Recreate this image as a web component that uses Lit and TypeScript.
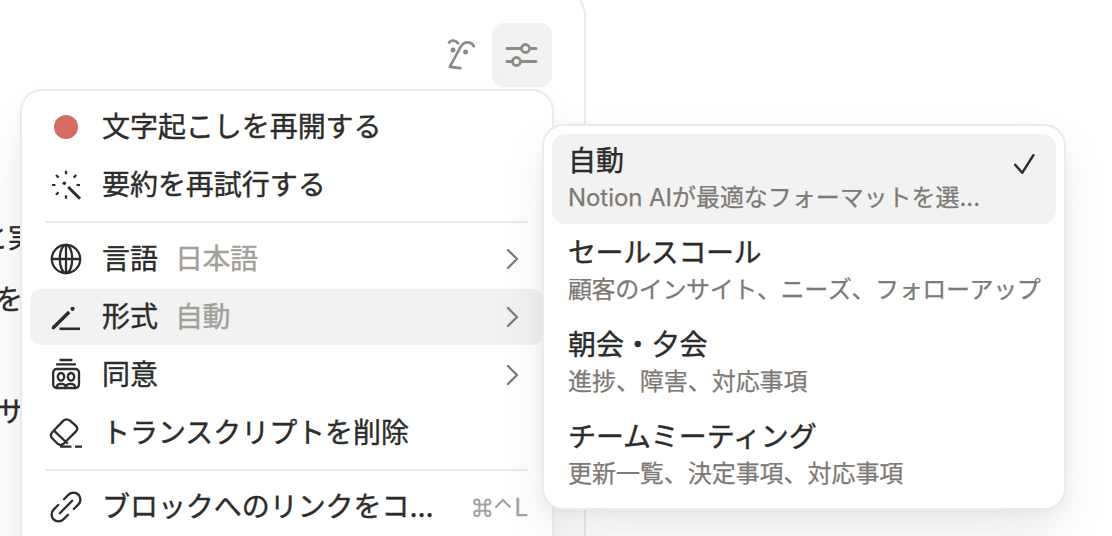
import { LitElement, html, css, svg, nothing } from "lit";
import { customElement, property } from "lit/decorators.js";

const icons: Record<string, unknown> = {
  record: svg`<circle cx="18" cy="18" r="12" fill="#d66c60" stroke="none"/>`,
  wand: svg`<path d="M18 3.8v3.4M18 28.2v3.6M4 18h3.4M28.6 18h3.4M8 8l2.6 2.6M28.2 8l-2.6 2.6M8 27.8l2.6-2.6" stroke-width="2.2" stroke-linecap="butt"/><circle cx="16.3" cy="16.2" r="1.8" fill="currentColor" stroke="none"/><path d="M20.2 20L32 31.8" stroke-width="3" stroke-linecap="butt"/>`,
  globe: svg`<circle cx="18" cy="18" r="14.2"/><ellipse cx="18" cy="18" rx="6.2" ry="14.2"/><path d="M4 18h28M18 4v28"/>`,
  pencil: svg`<path d="M5 29L21.2 13" stroke-width="3.4" stroke-linecap="butt"/><path d="M5 29.2l1-1" stroke-width="2.6"/><circle cx="24.6" cy="9.8" r="2.1" fill="currentColor" stroke="none"/><path d="M11.5 29.8H32" stroke-width="2.6" stroke-linecap="butt"/>`,
  consent: svg`<path d="M12.5 3h11M9 7.4h18"/><rect x="5.2" y="12" width="25.8" height="19" rx="3.5"/><ellipse cx="13" cy="19.8" rx="3.2" ry="3.8"/><ellipse cx="23" cy="19.8" rx="3.2" ry="3.8"/><path d="M8.6 30.4c.5-4.6 8.6-4.6 9.3 0c.5-4.6 8.8-4.6 9.3 0"/>`,
  eraser: svg`<path d="M15.2 5.9l-11 11.4q-2.7 3 0 6l5.4 5.4q3 2.5 6 0L28 16.4q2.5-2.8 0-5.5l-6-5.3q-3.6-2.7-6.8.3zM6 15.6L19 28"/><path d="M12 31.6h11.5M27 31.6h7" stroke-width="2.3" stroke-linecap="butt"/>`,
  link: svg`<path d="M11.8 24.2L24.2 11.8"/><path d="M16 10.2l4.6-4.6a6.9 6.9 0 0 1 9.8 9.8L25.8 20M10.2 16l-4.6 4.6a6.9 6.9 0 0 0 9.8 9.8L20 25.8"/>`,
};

@customElement("menu-row")
class MenuRow extends LitElement {
  @property() icon = "";
  @property() label = "";
  @property() value = "";
  @property() shortcut = "";
  @property({ type: Boolean }) submenu = false;
  @property({ type: Boolean, reflect: true }) active = false;

  static styles = css`
    :host {
      display: flex;
      align-items: center;
      height: 56px;
      padding: 0 16px 0 18px;
      border-radius: 12px;
      color: #2c2c2b;
      white-space: nowrap;
    }
    :host([active]) { background: #f2f2f2; }
    .icon {
      width: 36px;
      height: 36px;
      margin-right: 18px;
      fill: none;
      stroke: currentColor;
      stroke-width: 2.3;
      stroke-linecap: round;
      stroke-linejoin: round;
      flex: none;
    }
    .label { letter-spacing: -0.05px; line-height: 40px; -webkit-text-stroke: 0.4px currentColor; }
    .value { color: #a39f99; margin-left: 17px; line-height: 40px; letter-spacing: -0.4px; -webkit-text-stroke: 0.4px currentColor; }
    .spacer { flex: 1; }
    .chevron { width: 16px; height: 24px; margin-right: 8px; fill: none; stroke: #7f7e7a; stroke-width: 2.3; stroke-linecap: round; stroke-linejoin: round; }
    .shortcut { display: flex; align-items: center; color: #a5a29d; font: 24px Inter, sans-serif; gap: 2px; margin-top: 1px; -webkit-text-stroke: 0.3px currentColor; }
    .keys { width: 40px; height: 22px; fill: none; stroke: currentColor; stroke-width: 2; }
  `;

  render() {
    return html`
      <svg class="icon" viewBox="0 0 36 36">${icons[this.icon]}</svg>
      <span class="label">${this.label}</span>
      ${this.value ? html`<span class="value">${this.value}</span>` : nothing}
      <span class="spacer"></span>
      ${this.shortcut
        ? html`<span class="shortcut">
            <svg class="keys" viewBox="0 0 40 22">
              <path d="M7.4 7.6H4.8A2.6 2.6 0 1 1 7.4 5v11.4a2.6 2.6 0 1 1-2.6-2.6h11a2.6 2.6 0 1 1-2.6 2.6V5A2.6 2.6 0 1 1 15.8 7.6z" />
              <path d="M23.5 10.5l7.5-7.5 7.5 7.5" stroke-width="2.2" />
            </svg>${this.shortcut}</span>`
        : nothing}
      ${this.submenu ? html`<svg class="chevron" viewBox="0 0 16 24"><path d="M4 3l9 9-9 9" /></svg>` : nothing}
    `;
  }
}

@customElement("format-option")
class FormatOption extends LitElement {
  @property() name = "";
  @property() detail = "";
  @property({ type: Boolean, reflect: true }) selected = false;
  @property({ type: Boolean, reflect: true }) condensed = false;

  static styles = css`
    :host {
      display: flex;
      box-sizing: border-box;
      height: 90px;
      padding: 7px 15px 0 16px;
      border-radius: 14px;
      white-space: nowrap;
    }
    :host([selected]) { background: #f2f2f2; }
    .text { flex: 1; min-width: 0; }
    .name { font-size: 28px; line-height: 40px; letter-spacing: -0.1px; color: #2c2c2b; -webkit-text-stroke: 0.4px currentColor; }
    .detail { font-size: 24px; line-height: 34px; letter-spacing: -0.05px; color: #7d7a75; -webkit-text-stroke: 0.25px currentColor; font-kerning: none; }
    :host([condensed]) .name { letter-spacing: -0.4px; }
    :host([condensed]) .detail { letter-spacing: -0.38px; }
    .check { width: 24px; height: 24px; margin: 11px 5px 0 0; fill: none; stroke: #2c2c2b; stroke-width: 2.5; stroke-linecap: round; stroke-linejoin: round; }
  `;

  render() {
    return html`
      <div class="text">
        <div class="name">${this.name}</div>
        <div class="detail">${this.detail}</div>
      </div>
      ${this.selected ? html`<svg class="check" viewBox="0 0 24 24"><path d="M3.2 12.8l7 8L21.4 3.2" /></svg>` : nothing}
    `;
  }
}

@customElement("app-root")
class AppRoot extends LitElement {
  static styles = css`
    :host {
      display: block;
      position: relative;
      width: 1112px;
      height: 536px;
      overflow: hidden;
      background: #fff;
      color: #2c2c2b;
      font-family: Inter, "Noto Sans CJK JP", sans-serif;
      font-size: 28px;
    }
    .panel {
      box-sizing: border-box;
      width: 586px;
      height: 580px;
      margin-top: -12px;
      border: 2px solid #ebebeb;
      border-left: 0;
      border-radius: 0 28px 0 0;
    }
    .toolbar { display: flex; justify-content: flex-end; align-items: center; padding: 33px 32px 0 0; height: 64px; gap: 15px; }
    .face { width: 32px; height: 36px; fill: none; stroke: #8e8b86; stroke-width: 2.7; stroke-linecap: round; stroke-linejoin: round; }
    .settings { display: flex; align-items: center; justify-content: center; width: 60px; height: 64px; border-radius: 12px; background: #f2f2f2; }
    .sliders { width: 34px; height: 28px; margin-right: 2px; fill: none; stroke: #8e8b86; stroke-width: 2.8; stroke-linecap: round; }
    .note { display: flex; flex-direction: column; align-items: flex-end; width: 36px; padding-top: 131px; -webkit-text-stroke: 0.4px currentColor; }
    .line { line-height: 40px; white-space: nowrap; }
    .line + .line { margin: 22px 13px 0 0; }
    .line.last { margin: 72px 11px 0 0; }
    .menu, .submenu {
      position: absolute;
      box-sizing: border-box;
      background: #fff;
      background-clip: padding-box;
      border: 2px solid #ebebeb;
      padding: 8px;
    }
    .menu {
      left: 20px;
      top: 89px;
      width: 534px;
      height: 620px;
      border-radius: 22px;
      box-shadow: 0 28px 56px -8px rgba(0, 0, 0, 0.11), 0 4px 12px -2px rgba(0, 0, 0, 0.03);
    }
    .submenu {
      left: 542px;
      top: 124px;
      width: 524px;
      height: 386px;
      border-radius: 22px;
      box-shadow: 0 22px 56px -6px rgba(0, 0, 0, 0.1), 0 4px 12px -2px rgba(0, 0, 0, 0.05);
    }
    .menu, .submenu { display: flex; flex-direction: column; gap: 2px; }
    .divider { height: 2px; margin: 6px 16px; background: #ebebeb; flex: none; }
    menu-row, format-option { flex: none; }
  `;

  render() {
    return html`
      <div class="panel">
        <div class="toolbar">
          <svg class="face" viewBox="0 0 32 36">
            <path d="M4 5.5c2.5-2.7 7-2.5 9 .8M4.8 29.8l10.7-19.6C17.5 6.4 20 4.8 23.5 5.4c2.5.5 4.4 1.7 5.3 3.8M4.8 29.8l10.6 1.4" />
            <circle cx="8" cy="13" r="2.5" fill="#8e8b86" stroke="none" />
            <circle cx="20.6" cy="15" r="2.5" fill="#8e8b86" stroke="none" />
          </svg>
          <div class="settings">
            <svg class="sliders" viewBox="0 0 34 28">
              <path d="M3 7.5h14M27 7.5h5M3 20.5h5M18 20.5h14" />
              <circle cx="21.5" cy="7.5" r="4" /><circle cx="12.5" cy="20.5" r="4" />
            </svg>
          </div>
        </div>
        <div class="note">
          <div class="line">と実</div>
          <div class="line">を</div>
          <div class="line last">サ</div>
        </div>
      </div>

      <div class="menu">
        <menu-row icon="record" label="文字起こしを再開する"></menu-row>
        <menu-row icon="wand" label="要約を再試行する"></menu-row>
        <div class="divider"></div>
        <menu-row icon="globe" label="言語" value="日本語" submenu></menu-row>
        <menu-row icon="pencil" label="形式" value="自動" submenu active></menu-row>
        <menu-row icon="consent" label="同意" submenu></menu-row>
        <menu-row icon="eraser" label="トランスクリプトを削除"></menu-row>
        <div class="divider"></div>
        <menu-row icon="link" label="ブロックへのリンクをコ..." shortcut="L"></menu-row>
      </div>

      <div class="submenu">
        <format-option name="自動" detail="Notion AIが最適なフォーマットを選..." selected></format-option>
        <format-option name="セールスコール" detail="顧客のインサイト、ニーズ、フォローアップ" condensed></format-option>
        <format-option name="朝会・夕会" detail="進捗、障害、対応事項"></format-option>
        <format-option name="チームミーティング" detail="更新一覧、決定事項、対応事項"></format-option>
      </div>
    `;
  }
}
